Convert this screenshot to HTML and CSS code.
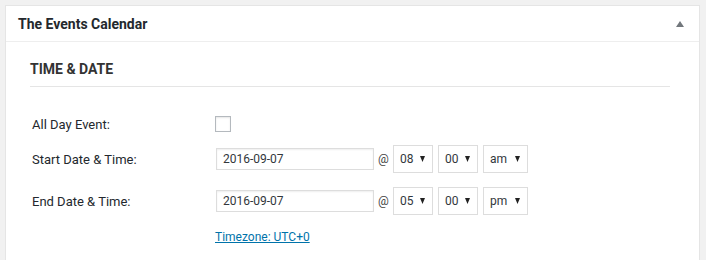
FILE: index.html
```html
<!DOCTYPE html>
<html>
<head>
<meta charset="utf-8">
<link rel="stylesheet" href="styles.css">
</head>
<body>
<div class="postbox">
  <div class="hndle">
    <h2 class="title">The Events Calendar</h2>
    <span class="toggle" aria-hidden="true"></span>
  </div>
  <div class="inside">
    <h3 class="section-title">Time &amp; Date</h3>
    <div class="rows">
      <div class="row row-check">
        <label class="label">All Day Event:</label>
        <span class="checkbox"></span>
      </div>
      <div class="row">
        <label class="label">Start Date &amp; Time:</label>
        <span class="date-input">2016-09-07</span>
        <span class="at">@</span>
        <span class="select w40">08<svg class="caret" viewBox="0 0 5 6"><polygon points="0,0 5,0 2.5,6"/></svg></span>
        <span class="select w40">00<svg class="caret" viewBox="0 0 5 6"><polygon points="0,0 5,0 2.5,6"/></svg></span>
        <span class="select w45">am<svg class="caret" viewBox="0 0 5 6"><polygon points="0,0 5,0 2.5,6"/></svg></span>
      </div>
      <div class="row">
        <label class="label">End Date &amp; Time:</label>
        <span class="date-input">2016-09-07</span>
        <span class="at">@</span>
        <span class="select w40">05<svg class="caret" viewBox="0 0 5 6"><polygon points="0,0 5,0 2.5,6"/></svg></span>
        <span class="select w40">00<svg class="caret" viewBox="0 0 5 6"><polygon points="0,0 5,0 2.5,6"/></svg></span>
        <span class="select w45">pm<svg class="caret" viewBox="0 0 5 6"><polygon points="0,0 5,0 2.5,6"/></svg></span>
      </div>
      <div class="row row-link">
        <span class="label"></span>
        <a class="tz" href="#">Timezone: UTC+0</a>
      </div>
    </div>
  </div>
</div>
</body>
</html>
```
FILE: styles.css
```css
html, body {
  margin: 0;
  padding: 0;
  background: #f1f1f1;
}
body {
  padding: 5px 6px 0 5px;
  font-family: Roboto, "Liberation Sans", sans-serif;
  color: #32373c;
}
.postbox {
  background: #fff;
  border: 1px solid #e5e5e5;
  border-bottom: none;
  height: 260px;
  box-sizing: border-box;
}
.hndle {
  display: flex;
  align-items: center;
  justify-content: space-between;
  height: 35px;
  border-bottom: 1px solid #eee;
  padding: 0 15px 0 12px;
}
.title {
  margin: 0;
  font-size: 14px;
  font-weight: 700;
  line-height: 20px;
  color: #23282d;
}
.toggle {
  width: 0;
  height: 0;
  border-left: 4px solid transparent;
  border-right: 4px solid transparent;
  border-bottom: 6px solid #72777c;
}
.inside {
  padding: 17px 0 0 24px;
}
.section-title {
  margin: 0;
  width: 640px;
  font-size: 14px;
  font-weight: 700;
  line-height: 20px;
  text-transform: uppercase;
  color: #333;
  padding-bottom: 7px;
  border-bottom: 1px solid #e5e5e5;
}
.rows {
  padding: 29px 0 0 2px;
}
.row {
  display: flex;
  align-items: center;
  height: 28px;
  margin-bottom: 14px;
  font-size: 13px;
}
.row-check {
  height: 16px;
  margin-bottom: 13px;
}
.row-link {
  height: 16px;
}
.label {
  width: 183px;
  flex: none;
  color: #23282d;
}
.checkbox {
  width: 14px;
  height: 14px;
  border: 1px solid #b4b9be;
  box-shadow: inset 0 1px 2px rgba(0,0,0,0.1);
}
.date-input {
  width: 158px;
  height: 22px;
  box-sizing: border-box;
  border: 1px solid #ddd;
  box-shadow: inset 0 1px 2px rgba(0,0,0,0.07);
  padding: 0 6px;
  font-size: 12px;
  line-height: 20px;
  color: #32373c;
  margin-left: 1px;
}
.at {
  width: 19px;
  text-align: center;
  font-size: 12px;
  color: #444;
}
.select {
  display: flex;
  align-items: center;
  justify-content: space-between;
  height: 28px;
  box-sizing: border-box;
  border: 1px solid #ddd;
  padding: 0 7px 0 6px;
  font-size: 12px;
  color: #32373c;
  margin-right: 5px;
}
.w40 { width: 40px; }
.w45 { width: 45px; }
.caret {
  width: 5px;
  height: 6px;
  fill: #222;
  margin-top: -1px;
}
.tz {
  font-size: 12px;
  color: #0073aa;
  text-decoration: underline;
}
```
